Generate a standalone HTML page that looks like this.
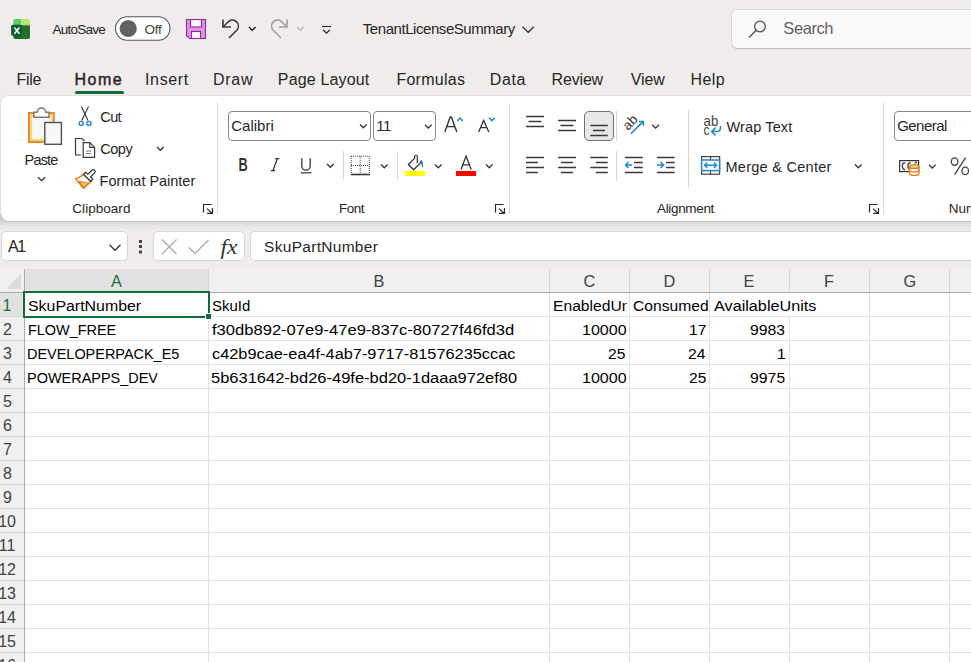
<!DOCTYPE html>
<html><head><meta charset="utf-8">
<style>
html,body{margin:0;padding:0;}
body{width:971px;height:662px;overflow:hidden;position:relative;background:#f0ecec;font-family:"Liberation Sans",sans-serif;}
.t{position:absolute;white-space:pre;font-family:"Liberation Sans",sans-serif;}
.abs{position:absolute;}
#ribbon{position:absolute;left:1px;top:96px;width:990px;height:125px;background:#fff;border-radius:8px;box-shadow:0 0 0 1px rgba(0,0,0,0.05);}
.box{position:absolute;background:#fff;border:1px solid #d9d6d6;border-radius:5px;box-sizing:border-box;}
.sbox{position:absolute;background:#fff;border:1px solid #8a8886;border-radius:4px;box-sizing:border-box;}
.hl{position:absolute;height:1px;}
.vl{position:absolute;width:1px;}
.cell{position:absolute;overflow:hidden;white-space:pre;font-family:"Liberation Sans",sans-serif;}
</style></head><body>
<!-- search box -->
<div class="abs" style="left:732px;top:10px;width:260px;height:38px;background:#fafafa;border-radius:5px;box-shadow:0 0 0 1px rgba(0,0,0,0.07),0 1px 1px rgba(0,0,0,0.14);"></div>
<!-- home underline -->
<div class="abs" style="left:75px;top:91px;width:49px;height:3px;border-radius:1.5px;background:#0f6e3b;"></div>
<!-- ribbon -->
<div class="abs" style="left:0;top:214px;width:971px;height:17px;background:linear-gradient(#cfcdcd 0px,#cfcdcd 7px,#d9d7d7 8px,#e0dede 10px,#e6e4e4 12px,#eae8e8 14px,#eeebeb 17px);"></div>
<div id="ribbon"></div>
<!-- font boxes -->
<div class="sbox" style="left:228px;top:111px;width:143px;height:30px;"></div>
<div class="sbox" style="left:373px;top:111px;width:63px;height:30px;"></div>
<div class="sbox" style="left:894px;top:111px;width:100px;height:30px;"></div>
<!-- selected bottom align button -->
<div class="abs" style="left:584px;top:111px;width:30px;height:30px;box-sizing:border-box;background:#e8e8e8;border:1px solid #707070;border-radius:5px;"></div>
<!-- formula bar boxes -->
<div class="box" style="left:1px;top:231px;width:127px;height:30px;"></div>
<div class="box" style="left:153px;top:231px;width:92px;height:30px;"></div>
<div class="box" style="left:250px;top:231px;width:740px;height:30px;"></div>

<!-- GRID -->
<div class="abs" style="left:0;top:269px;width:971px;height:393px;background:#fff;"></div>
<div class="abs" style="left:0;top:269px;width:971px;height:23px;background:#f0f0f0;"></div>
<div class="abs" style="left:0;top:292px;width:24px;height:370px;background:#f0f0f0;"></div>
<div class="abs" style="left:25px;top:269px;width:183px;height:23px;background:#e1e1e1;"></div>
<div class="abs" style="left:0;top:293px;width:24px;height:23px;background:#e1e1e1;"></div>
<div class="hl" style="left:0;top:316px;width:24px;background:#d6d6d6"></div>
<div class="hl" style="left:25px;top:316px;width:946px;background:#e1e1e1"></div>
<div class="hl" style="left:0;top:340px;width:24px;background:#d6d6d6"></div>
<div class="hl" style="left:25px;top:340px;width:946px;background:#e1e1e1"></div>
<div class="hl" style="left:0;top:364px;width:24px;background:#d6d6d6"></div>
<div class="hl" style="left:25px;top:364px;width:946px;background:#e1e1e1"></div>
<div class="hl" style="left:0;top:388px;width:24px;background:#d6d6d6"></div>
<div class="hl" style="left:25px;top:388px;width:946px;background:#e1e1e1"></div>
<div class="hl" style="left:0;top:412px;width:24px;background:#d6d6d6"></div>
<div class="hl" style="left:25px;top:412px;width:946px;background:#e1e1e1"></div>
<div class="hl" style="left:0;top:436px;width:24px;background:#d6d6d6"></div>
<div class="hl" style="left:25px;top:436px;width:946px;background:#e1e1e1"></div>
<div class="hl" style="left:0;top:460px;width:24px;background:#d6d6d6"></div>
<div class="hl" style="left:25px;top:460px;width:946px;background:#e1e1e1"></div>
<div class="hl" style="left:0;top:484px;width:24px;background:#d6d6d6"></div>
<div class="hl" style="left:25px;top:484px;width:946px;background:#e1e1e1"></div>
<div class="hl" style="left:0;top:508px;width:24px;background:#d6d6d6"></div>
<div class="hl" style="left:25px;top:508px;width:946px;background:#e1e1e1"></div>
<div class="hl" style="left:0;top:532px;width:24px;background:#d6d6d6"></div>
<div class="hl" style="left:25px;top:532px;width:946px;background:#e1e1e1"></div>
<div class="hl" style="left:0;top:556px;width:24px;background:#d6d6d6"></div>
<div class="hl" style="left:25px;top:556px;width:946px;background:#e1e1e1"></div>
<div class="hl" style="left:0;top:580px;width:24px;background:#d6d6d6"></div>
<div class="hl" style="left:25px;top:580px;width:946px;background:#e1e1e1"></div>
<div class="hl" style="left:0;top:604px;width:24px;background:#d6d6d6"></div>
<div class="hl" style="left:25px;top:604px;width:946px;background:#e1e1e1"></div>
<div class="hl" style="left:0;top:628px;width:24px;background:#d6d6d6"></div>
<div class="hl" style="left:25px;top:628px;width:946px;background:#e1e1e1"></div>
<div class="hl" style="left:0;top:652px;width:24px;background:#d6d6d6"></div>
<div class="hl" style="left:25px;top:652px;width:946px;background:#e1e1e1"></div>
<div class="vl" style="left:208px;top:269px;height:23px;background:#d6d6d6"></div>
<div class="vl" style="left:208px;top:293px;height:369px;background:#e1e1e1"></div>
<div class="vl" style="left:549px;top:269px;height:23px;background:#d6d6d6"></div>
<div class="vl" style="left:549px;top:293px;height:369px;background:#e1e1e1"></div>
<div class="vl" style="left:629px;top:269px;height:23px;background:#d6d6d6"></div>
<div class="vl" style="left:629px;top:293px;height:369px;background:#e1e1e1"></div>
<div class="vl" style="left:709px;top:269px;height:23px;background:#d6d6d6"></div>
<div class="vl" style="left:709px;top:293px;height:369px;background:#e1e1e1"></div>
<div class="vl" style="left:789px;top:269px;height:23px;background:#d6d6d6"></div>
<div class="vl" style="left:789px;top:317px;height:345px;background:#e1e1e1"></div>
<div class="vl" style="left:869px;top:269px;height:23px;background:#d6d6d6"></div>
<div class="vl" style="left:869px;top:293px;height:369px;background:#e1e1e1"></div>
<div class="vl" style="left:949px;top:269px;height:23px;background:#d6d6d6"></div>
<div class="vl" style="left:949px;top:293px;height:369px;background:#e1e1e1"></div>
<div class="hl" style="left:0;top:292px;width:971px;background:#ababab"></div>
<div class="vl" style="left:24px;top:269px;height:393px;background:#ababab"></div>
<!-- corner triangle -->
<svg class="abs" style="left:0;top:269px" width="24" height="23"><path d="M6,20 L21,20 L21,5 Z" fill="#dcdcdc"/></svg>
<!-- selection -->
<div class="abs" style="left:23px;top:291px;width:187px;height:27px;box-sizing:border-box;border:2px solid #0f6e3b;"></div>
<div class="abs" style="left:205px;top:313px;width:7px;height:7px;background:#fff;"></div>
<div class="abs" style="left:206px;top:314px;width:5px;height:5px;background:#0f6e3b;"></div>

<svg class="abs" style="left:0;top:0;pointer-events:none" width="971" height="662" viewBox="0 0 971 662">
<!-- Excel logo -->
<g>
  <path d="M13.3,21 a2,2 0 0 1 2,-2 H21.2 V25.6 H13.3 Z" fill="#5fcd62"/>
  <path d="M21.2,19 H27.8 a2,2 0 0 1 2,2 V25.6 H21.2 Z" fill="#b3e66e"/>
  <path d="M13.3,25.6 H29.8 V37 a2,2 0 0 1 -2,2 H15.3 a2,2 0 0 1 -2,-2 Z" fill="#1b6329"/>
  <path d="M21.2,25.6 H29.8 V37 a2,2 0 0 1 -2,2 H21.2 Z" fill="#246d2b"/>
  <rect x="11.1" y="24.8" width="10.8" height="11" rx="1.8" fill="#0f5a32"/>
  <path d="M14.4,27.6 L19.4,33.7 M19.4,27.6 L14.4,33.7" stroke="#fff" stroke-width="1.6"/>
</g>
<!-- toggle -->
<rect x="115.5" y="16.8" width="54.5" height="23.4" rx="11.7" fill="#fff" stroke="#555" stroke-width="1.1"/>
<circle cx="128.2" cy="28.5" r="8.6" fill="#616161"/>
<!-- save -->
<path d="M186.5,19.5 H205.5 V38.5 H189.5 L186.5,35.5 Z" fill="#d994dd" stroke="#9c22a8" stroke-width="1.1"/>
<rect x="190.5" y="19.5" width="11" height="7.5" fill="#fbf7fb" stroke="#9c22a8" stroke-width="1.1"/>
<rect x="191.5" y="31.5" width="9" height="7" fill="#fbf7fb" stroke="#9c22a8" stroke-width="1.1"/>
<!-- undo -->
<g fill="none" stroke="#3a3a3a" stroke-width="1.6">
  <path d="M223,19.5 V27 H231"/>
  <path d="M223,27 L228.8,21.3 A6 6 0 0 1 237.2,29.7 L229,38"/>
</g>
<path d="M249,27 L252.3,30.3 L255.6,27" fill="none" stroke="#222" stroke-width="1.4"/>
<!-- redo -->
<g fill="none" stroke="#9e9e9e" stroke-width="1.6">
  <path d="M287,19.5 V27 H279"/>
  <path d="M287,27 L281.2,21.3 A6 6 0 0 0 272.8,29.7 L281,38"/>
</g>
<path d="M297,27 L300.3,30.3 L303.6,27" fill="none" stroke="#b5b5b5" stroke-width="1.3"/>
<!-- customize -->
<path d="M322,26.5 H331" stroke="#222" stroke-width="1.1"/>
<path d="M323.1,29.9 L326.5,33.2 L329.9,29.9" fill="none" stroke="#222" stroke-width="1.3"/>
<!-- title chevron -->
<path d="M522.5,26.8 L528.2,32.3 L533.8,26.8" fill="none" stroke="#333" stroke-width="1.3"/>
<!-- search magnifier -->
<circle cx="760" cy="26.5" r="5.3" fill="none" stroke="#555" stroke-width="1.3"/>
<path d="M756.2,30.3 L749,37.5" stroke="#555" stroke-width="1.4"/>

<!-- ===== Ribbon: Clipboard ===== -->
<!-- paste -->
<rect x="29" y="113" width="24.8" height="29" fill="#f8f8f8" stroke="#ea8a22" stroke-width="2"/>
<rect x="31.1" y="115.1" width="20.6" height="24.8" fill="none" stroke="#f8d98a" stroke-width="2.2"/>
<path d="M33.8,112.2 H37.1 A4.3,4.3 0 0 1 45.7,112.2 H49 V117.3 H33.8 Z" fill="#fff" stroke="#7a7a7a" stroke-width="1.5"/>
<rect x="44.8" y="122.5" width="16.6" height="21.8" fill="#f8f8f8" stroke="#505050" stroke-width="1.4"/>
<path d="M38,177.2 L41.6,180.6 L45.2,177.2" fill="none" stroke="#333" stroke-width="1.3"/>
<!-- scissors -->
<path d="M81.4,106.5 L88,120.5 M88.5,106.5 L81.8,120.5" fill="none" stroke="#333" stroke-width="1.1"/>
<circle cx="81.2" cy="123.4" r="2.1" fill="#fff" stroke="#1a86d0" stroke-width="1.3"/>
<circle cx="88.9" cy="123.4" r="2.1" fill="#fff" stroke="#1a86d0" stroke-width="1.3"/>
<!-- copy -->
<path d="M81,155 H75.5 V138.5 H82 L84.5,141" fill="#fafafa" stroke="#3b3b3b" stroke-width="1.2"/>
<path d="M83.2,142.6 H89.8 L94.6,147.4 V157.3 H83.2 Z" fill="#fff" stroke="#3b3b3b" stroke-width="1.2"/>
<path d="M89.8,142.6 V147.4 H94.6" fill="none" stroke="#3b3b3b" stroke-width="1.2"/>
<path d="M86.1,151 H91.2 M86.1,153.6 H91.2" stroke="#777" stroke-width="1"/>
<path d="M157,147 L160.3,150.3 L163.6,147" fill="none" stroke="#333" stroke-width="1.3"/>
<!-- format painter -->
<g transform="translate(72,166)">
  <path d="M11.4,8.2 C9,10.5 6,12.5 3.3,12.6 L11.4,22.4 C14,20 16.5,18 18.8,15.5 Z" fill="#fff" stroke="#e8740e" stroke-width="1.3" stroke-linejoin="round"/>
  <path d="M6.8,15.2 L17,17.3 L11.4,21.4 Z" fill="#f6d07a" stroke="#e8740e" stroke-width="1.1" stroke-linejoin="round"/>
  <path d="M11.4,8.2 L13.6,6.2 L15.8,8.4 L20.2,4 Q21.5,3 22.7,4.3 Q23.8,5.5 22.8,6.7 L18.6,11 L20.8,13.2 L18.8,15.5 Z" fill="#fff" stroke="#333" stroke-width="1.2" stroke-linejoin="round"/>
</g>
<!-- launchers -->
<g fill="none" stroke="#2a2a2a" stroke-width="1.2">
<path d="M203.5,212.5 V204.5 H211.5" /><path d="M207.0,208.6 L212.0,213.3 M207.0,213.3 H212.5 V208" />
<path d="M495.5,212.5 V204.5 H503.5" /><path d="M499.0,208.6 L504.0,213.3 M499.0,213.3 H504.5 V208" />
<path d="M869.5,212.5 V204.5 H877.5" /><path d="M873.0,208.6 L878.0,213.3 M873.0,213.3 H878.5 V208" />
</g>
<!-- separators -->
<g fill="#d8d8d8">
  <rect x="217" y="103" width="1" height="111"/>
  <rect x="509" y="103" width="1" height="111"/>
  <rect x="883" y="103" width="1" height="111"/>
  <rect x="343" y="151" width="1" height="29"/>
  <rect x="397" y="151" width="1" height="29"/>
  <rect x="616" y="111" width="1" height="30"/>
  <rect x="616" y="151" width="1" height="30"/>
  <rect x="688" y="110" width="1" height="78"/>
</g>
<!-- ===== Font ===== -->
<g fill="none" stroke="#333" stroke-width="1.3">
  <path d="M360,124.5 L363.3,127.8 L366.6,124.5"/>
  <path d="M425,124.8 L428.3,128.1 L431.6,124.8"/>
  <path d="M327,164 L330.3,167.3 L333.6,164"/>
  <path d="M381,164.5 L384.3,167.8 L387.6,164.5"/>
  <path d="M435,164.5 L438.3,167.8 L441.6,164.5"/>
  <path d="M486,164.5 L489.3,167.8 L492.6,164.5"/>
</g>
<!-- grow/shrink font -->
<path d="M444.8,132 L450.2,116.9 H451.4 L456.8,132 M446.8,126.6 H454.8" fill="none" stroke="#333" stroke-width="1.4"/>
<path d="M457.3,121 L460,118 L462.7,121" fill="none" stroke="#1a86d0" stroke-width="1.5"/>
<path d="M478.6,132 L483.7,120.4 L488.8,132 M480.4,127.6 H487" fill="none" stroke="#333" stroke-width="1.3"/>
<path d="M489,117.8 L491.8,120.6 L494.6,117.8" fill="none" stroke="#1a86d0" stroke-width="1.5"/>
<!-- B I U -->
<text x="238.6" y="171" font-family="Liberation Sans" font-weight="bold" font-size="17.5" fill="#333" textLength="9.2" lengthAdjust="spacingAndGlyphs">B</text>
<path d="M275.2,158.6 H279.4 M270.8,170.7 H275 M277.3,158.6 L272.9,170.7" fill="none" stroke="#333" stroke-width="1.3"/>
<path d="M301.8,158.3 V166 A4.2,4.2 0 0 0 310.2,166 V158.3" fill="none" stroke="#333" stroke-width="1.3"/>
<path d="M300.8,172.8 H311.5" stroke="#333" stroke-width="1.2"/>
<!-- borders -->
<g stroke="#444" stroke-width="1" stroke-dasharray="1 1" fill="none">
  <path d="M351,156.2 H369.5 M351,165.5 H369.5 M351.2,156 V174 M369.3,156 V174 M360.2,156 V174"/>
</g>
<path d="M350.8,174.5 H370" stroke="#333" stroke-width="1.6"/>
<!-- fill bucket -->
<path d="M414.5,158.4 L408.4,164.5 L413.6,169.7 L420.6,162.9" fill="#fafafa" stroke="#333" stroke-width="1.3" stroke-linejoin="round"/>
<path d="M414.6,158.8 V156.6 A1.35,1.35 0 0 1 417.3,156.6 V163" fill="none" stroke="#333" stroke-width="1.2"/>
<path d="M419.6,162.2 Q420.3,159.6 422,160.4 Q423.4,161.6 422.7,168.3 Q421.5,166.5 421.2,163.6 Z" fill="#1e6fc4"/>
<rect x="405" y="171" width="20.2" height="5" fill="#ffff00"/>
<!-- font color -->
<path d="M461,169.5 L466.1,156 L471.2,169.5 M462.8,164.8 H469.4" fill="none" stroke="#333" stroke-width="1.3"/>
<rect x="456" y="171" width="20" height="5" fill="#ff0000"/>

<!-- ===== Alignment ===== -->
<g stroke="#3a3a3a" stroke-width="1.3" fill="none">
  <path d="M526,116.5 H544 M528.5,121.5 H541.5 M526,126.5 H544"/>
  <path d="M558,120.5 H576 M560.5,125.5 H573.5 M558,130.5 H576"/>
  <path d="M590.3,125.5 H607.8 M593,130.5 H605 M590.3,135.5 H607.8"/>
  <path d="M526,157.5 H544 M526,162.5 H538 M526,167.5 H544 M526,172.5 H538"/>
  <path d="M558,157.5 H576 M561,162.5 H573 M558,167.5 H576 M561,172.5 H573"/>
  <path d="M590.3,157.5 H607.8 M595.8,162.5 H607.8 M590.3,167.5 H607.8 M595.8,172.5 H607.8"/>
  <path d="M625,157.5 H642.8 M634,162.5 H642.8 M634,167.5 H642.8 M625,172.5 H642.8"/>
  <path d="M657,157.5 H674.7 M666,162.5 H674.7 M666,167.5 H674.7 M657,172.5 H674.7"/>
</g>
<g stroke="#1a86d0" stroke-width="1.4" fill="none">
  <path d="M632,165 H625.5 M628.5,162 L625.5,165 L628.5,168"/>
  <path d="M657,165 H663.5 M660.5,162 L663.5,165 L660.5,168"/>
</g>
<!-- orientation -->
<text x="0" y="0" transform="translate(627.9,130.9) rotate(-45)" font-family="Liberation Sans" font-size="13.5" fill="#333">ab</text>
<path d="M630.8,133.8 L643.4,121.4 M639,121.4 H643.4 V125.8" fill="none" stroke="#1a86d0" stroke-width="1.5"/>
<path d="M652.3,124.8 L655.6,128.1 L658.9,124.8" fill="none" stroke="#333" stroke-width="1.3"/>
<!-- wrap text -->
<text x="703.6" y="125.8" font-family="Liberation Sans" font-size="14.2" fill="#444" textLength="14.6" lengthAdjust="spacingAndGlyphs">ab</text>
<text x="703.4" y="134.8" font-family="Liberation Sans" font-size="14.2" fill="#444" textLength="6" lengthAdjust="spacingAndGlyphs">c</text>
<path d="M720.5,126 V127.5 Q720.5,131.6 715.8,131.6 H711.8 M715.6,127.6 L711.6,131.6 L715.6,135.5" fill="none" stroke="#1a86d0" stroke-width="1.5"/>
<!-- merge -->
<rect x="701.6" y="156.6" width="18" height="17.6" fill="#fff" stroke="#444" stroke-width="1.2"/>
<path d="M710.5,156.6 V160 M710.5,170.5 V174.2" stroke="#444" stroke-width="1.1"/>
<rect x="701.6" y="160" width="18" height="10.6" fill="#fff" stroke="#1a86d0" stroke-width="1.5"/>
<path d="M704.5,165.3 H716.6 M707.3,162.5 L704.5,165.3 L707.3,168.1 M713.8,162.5 L716.6,165.3 L713.8,168.1" fill="none" stroke="#1a86d0" stroke-width="1.4"/>
<path d="M855,164.5 L858.3,167.8 L861.6,164.5" fill="none" stroke="#333" stroke-width="1.3"/>
<!-- ===== Number ===== -->
<rect x="899.6" y="160.6" width="19" height="11" fill="#fff" stroke="#333" stroke-width="1.2"/>
<path d="M905.2,162.8 A2.9,3.5 0 0 0 905.2,169.8 M910.8,162.8 A2.9,3.5 0 0 0 910.8,169.8 M914.5,162.5 H917" fill="none" stroke="#4a4a4a" stroke-width="1.4"/>
<path d="M909.5,166.6 V173.5 A4.7,1.9 0 0 0 918.9,173.5 V166.6" fill="#fff" stroke="#e8740e" stroke-width="1.3"/>
<path d="M909.5,170 A4.7,1.9 0 0 0 918.9,170" fill="none" stroke="#e8740e" stroke-width="1.2"/>
<ellipse cx="914.2" cy="166.6" rx="4.7" ry="1.9" fill="#f7d98a" stroke="#e8740e" stroke-width="1.3"/>
<path d="M929,164.8 L932.3,168.1 L935.6,164.8" fill="none" stroke="#333" stroke-width="1.3"/>
<g fill="none" stroke="#444" stroke-width="1.3"><ellipse cx="954.6" cy="161.6" rx="3.3" ry="3.7"/><ellipse cx="965.2" cy="170.9" rx="3.3" ry="3.7"/><path d="M965.6,157.6 L954.6,174.7"/></g>

<!-- ===== formula bar ===== -->
<path d="M109.5,244.8 L115,250.3 L120.5,244.8" fill="none" stroke="#333" stroke-width="1.3"/>
<g fill="#444"><rect x="139" y="240" width="3" height="3"/><rect x="139" y="245" width="3" height="3"/><rect x="139" y="250.5" width="3" height="3"/></g>
<path d="M162,239.5 L176.5,254 M176.5,239.5 L162,254" stroke="#a8a8a8" stroke-width="1.2"/>
<path d="M189,247.5 L195,253.5 L208.5,240" fill="none" stroke="#a8a8a8" stroke-width="1.2"/>
<text x="220.5" y="253.5" font-family="Liberation Serif" font-style="italic" font-size="21" fill="#333" textLength="17" lengthAdjust="spacingAndGlyphs">fx</text>
</svg>

<div class="t" style="left:52.50px;top:20.72px;font-size:13.5px;line-height:17px;color:#262626;font-weight:400;letter-spacing:-0.748px;">AutoSave</div>
<div class="t" style="left:144.60px;top:20.52px;font-size:13.5px;line-height:17px;color:#424242;font-weight:400;letter-spacing:-0.304px;">Off</div>
<div class="t" style="left:362.80px;top:19.40px;font-size:15px;line-height:19px;color:#262626;font-weight:400;letter-spacing:-0.443px;">TenantLicenseSummary</div>
<div class="t" style="left:783.30px;top:17.98px;font-size:16.5px;line-height:21px;color:#616161;font-weight:400;letter-spacing:-0.421px;">Search</div>
<div class="t" style="left:16.40px;top:69.76px;font-size:16px;line-height:20px;color:#262626;font-weight:400;letter-spacing:-0.261px;">File</div>
<div class="t" style="left:74.50px;top:69.76px;font-size:16px;line-height:20px;color:#262626;font-weight:400;letter-spacing:1.506px;-webkit-text-stroke:0.45px #262626">Home</div>
<div class="t" style="left:145.00px;top:69.76px;font-size:16px;line-height:20px;color:#262626;font-weight:400;letter-spacing:0.646px;">Insert</div>
<div class="t" style="left:213.00px;top:69.76px;font-size:16px;line-height:20px;color:#262626;font-weight:400;letter-spacing:0.740px;">Draw</div>
<div class="t" style="left:277.80px;top:69.76px;font-size:16px;line-height:20px;color:#262626;font-weight:400;letter-spacing:0.159px;">Page Layout</div>
<div class="t" style="left:396.40px;top:69.76px;font-size:16px;line-height:20px;color:#262626;font-weight:400;letter-spacing:0.274px;">Formulas</div>
<div class="t" style="left:489.80px;top:69.76px;font-size:16px;line-height:20px;color:#262626;font-weight:400;letter-spacing:0.567px;">Data</div>
<div class="t" style="left:551.60px;top:69.76px;font-size:16px;line-height:20px;color:#262626;font-weight:400;letter-spacing:-0.181px;">Review</div>
<div class="t" style="left:630.70px;top:69.76px;font-size:16px;line-height:20px;color:#262626;font-weight:400;letter-spacing:-0.079px;">View</div>
<div class="t" style="left:690.50px;top:69.76px;font-size:16px;line-height:20px;color:#262626;font-weight:400;letter-spacing:0.397px;">Help</div>
<div class="t" style="left:24.60px;top:150.78px;font-size:14.5px;line-height:19px;color:#262626;font-weight:400;letter-spacing:-0.829px;">Paste</div>
<div class="t" style="left:100.30px;top:108.08px;font-size:14.5px;line-height:19px;color:#262626;font-weight:400;letter-spacing:-0.618px;">Cut</div>
<div class="t" style="left:100.30px;top:139.78px;font-size:14.5px;line-height:19px;color:#262626;font-weight:400;letter-spacing:-0.500px;">Copy</div>
<div class="t" style="left:99.60px;top:171.58px;font-size:14.5px;line-height:19px;color:#262626;font-weight:400;letter-spacing:-0.020px;">Format Painter</div>
<div class="t" style="left:72.30px;top:199.62px;font-size:13.5px;line-height:17px;color:#262626;font-weight:400;letter-spacing:0.041px;">Clipboard</div>
<div class="t" style="left:231.20px;top:116.30px;font-size:15px;line-height:19px;color:#262626;font-weight:400;letter-spacing:0.020px;">Calibri</div>
<div class="t" style="left:376.20px;top:116.40px;font-size:15px;line-height:19px;color:#262626;font-weight:400;letter-spacing:-0.529px;">11</div>
<div class="t" style="left:339.00px;top:199.62px;font-size:13.5px;line-height:17px;color:#262626;font-weight:400;letter-spacing:-0.487px;">Font</div>
<div class="t" style="left:657.00px;top:199.62px;font-size:13.5px;line-height:17px;color:#262626;font-weight:400;letter-spacing:-0.335px;">Alignment</div>
<div class="t" style="left:726.50px;top:118.18px;font-size:14.5px;line-height:19px;color:#262626;font-weight:400;letter-spacing:0.128px;">Wrap Text</div>
<div class="t" style="left:725.50px;top:158.18px;font-size:14.5px;line-height:19px;color:#262626;font-weight:400;letter-spacing:0.268px;">Merge &amp; Center</div>
<div class="t" style="left:897.20px;top:116.40px;font-size:15px;line-height:19px;color:#262626;font-weight:400;letter-spacing:-0.539px;">General</div>
<div class="t" style="left:948.80px;top:199.62px;font-size:13.5px;line-height:17px;color:#262626;font-weight:400;letter-spacing:0.000px;">Number</div>
<div class="t" style="left:8.00px;top:236.56px;font-size:16px;line-height:20px;color:#262626;font-weight:400;letter-spacing:-1.472px;">A1</div>
<div class="t" style="left:264.10px;top:236.93px;font-size:15.5px;line-height:20px;color:#262626;font-weight:400;letter-spacing:0.292px;">SkuPartNumber</div>
<div class="t" style="left:111.00px;top:270.85px;font-size:16.3px;line-height:21px;color:#1d6b3f">A</div>
<div class="t" style="left:373.50px;top:270.85px;font-size:16.3px;line-height:21px;color:#424242">B</div>
<div class="t" style="left:583.50px;top:270.85px;font-size:16.3px;line-height:21px;color:#424242">C</div>
<div class="t" style="left:663.50px;top:270.85px;font-size:16.3px;line-height:21px;color:#424242">D</div>
<div class="t" style="left:743.50px;top:270.85px;font-size:16.3px;line-height:21px;color:#424242">E</div>
<div class="t" style="left:824.00px;top:270.85px;font-size:16.3px;line-height:21px;color:#424242">F</div>
<div class="t" style="left:903.50px;top:270.85px;font-size:16.3px;line-height:21px;color:#424242">G</div>
<div class="t" style="left:2.60px;top:295.96px;font-size:16px;line-height:20px;color:#1d6b3f">1</div>
<div class="t" style="left:3.10px;top:319.96px;font-size:16px;line-height:20px;color:#424242">2</div>
<div class="t" style="left:3.10px;top:343.96px;font-size:16px;line-height:20px;color:#424242">3</div>
<div class="t" style="left:3.10px;top:367.96px;font-size:16px;line-height:20px;color:#424242">4</div>
<div class="t" style="left:3.10px;top:391.96px;font-size:16px;line-height:20px;color:#424242">5</div>
<div class="t" style="left:3.10px;top:415.96px;font-size:16px;line-height:20px;color:#424242">6</div>
<div class="t" style="left:3.10px;top:439.96px;font-size:16px;line-height:20px;color:#424242">7</div>
<div class="t" style="left:3.10px;top:463.96px;font-size:16px;line-height:20px;color:#424242">8</div>
<div class="t" style="left:3.10px;top:487.96px;font-size:16px;line-height:20px;color:#424242">9</div>
<div class="t" style="left:-1.85px;top:511.96px;font-size:16px;line-height:20px;color:#424242">10</div>
<div class="t" style="left:-1.26px;top:535.96px;font-size:16px;line-height:20px;color:#424242">11</div>
<div class="t" style="left:-1.85px;top:559.96px;font-size:16px;line-height:20px;color:#424242">12</div>
<div class="t" style="left:-1.85px;top:583.96px;font-size:16px;line-height:20px;color:#424242">13</div>
<div class="t" style="left:-1.85px;top:607.96px;font-size:16px;line-height:20px;color:#424242">14</div>
<div class="t" style="left:-1.85px;top:631.96px;font-size:16px;line-height:20px;color:#424242">15</div>
<div class="t" style="left:-1.85px;top:655.96px;font-size:16px;line-height:20px;color:#424242">16</div>
<div class="cell" style="left:28.30px;top:296.13px;font-size:15.5px;line-height:20px;color:#000;transform:scaleX(1.0263);transform-origin:0 0">SkuPartNumber</div>
<div class="cell" style="left:211.80px;top:296.13px;font-size:15.5px;line-height:20px;color:#000;transform:scaleX(0.9637);transform-origin:0 0">SkuId</div>
<div class="cell" style="left:552.79px;top:296.13px;font-size:15.5px;line-height:20px;color:#000;transform:scaleX(1.0101);transform-origin:0 0;width:73.47px;overflow:hidden">EnabledUnits</div>
<div class="cell" style="left:633.00px;top:296.13px;font-size:15.5px;line-height:20px;color:#000;transform:scaleX(1.0101);transform-origin:0 0;width:75.24px;overflow:hidden">ConsumedUnits</div>
<div class="cell" style="left:713.80px;top:296.13px;font-size:15.5px;line-height:20px;color:#000;transform:scaleX(1.0460);transform-origin:0 0">AvailableUnits</div>
<div class="cell" style="left:27.77px;top:320.13px;font-size:15.5px;line-height:20px;color:#000;transform:scaleX(0.9315);transform-origin:0 0">FLOW_FREE</div>
<div class="cell" style="left:211.60px;top:320.13px;font-size:15.5px;line-height:20px;color:#000;transform:scaleX(1.0689);transform-origin:0 0">f30db892-07e9-47e9-837c-80727f46fd3d</div>
<div class="cell" style="left:581.76px;top:320.13px;font-size:15.5px;line-height:20px;color:#000;transform:scaleX(1.0357);transform-origin:0 0">10000</div>
<div class="cell" style="left:688.71px;top:320.13px;font-size:15.5px;line-height:20px;color:#000;transform:scaleX(1.0101);transform-origin:0 0">17</div>
<div class="cell" style="left:750.00px;top:320.13px;font-size:15.5px;line-height:20px;color:#000;transform:scaleX(1.0189);transform-origin:0 0">9983</div>
<div class="cell" style="left:27.47px;top:344.13px;font-size:15.5px;line-height:20px;color:#000;transform:scaleX(0.9322);transform-origin:0 0">DEVELOPERPACK_E5</div>
<div class="cell" style="left:211.60px;top:344.13px;font-size:15.5px;line-height:20px;color:#000;transform:scaleX(1.0542);transform-origin:0 0">c42b9cae-ea4f-4ab7-9717-81576235ccac</div>
<div class="cell" style="left:608.41px;top:344.13px;font-size:15.5px;line-height:20px;color:#000;transform:scaleX(1.0101);transform-origin:0 0">25</div>
<div class="cell" style="left:687.70px;top:344.13px;font-size:15.5px;line-height:20px;color:#000;transform:scaleX(1.0101);transform-origin:0 0">24</div>
<div class="cell" style="left:777.02px;top:344.13px;font-size:15.5px;line-height:20px;color:#000;transform:scaleX(1.0101);transform-origin:0 0">1</div>
<div class="cell" style="left:27.47px;top:368.13px;font-size:15.5px;line-height:20px;color:#000;transform:scaleX(0.9332);transform-origin:0 0">POWERAPPS_DEV</div>
<div class="cell" style="left:210.80px;top:368.13px;font-size:15.5px;line-height:20px;color:#000;transform:scaleX(1.0637);transform-origin:0 0">5b631642-bd26-49fe-bd20-1daaa972ef80</div>
<div class="cell" style="left:581.76px;top:368.13px;font-size:15.5px;line-height:20px;color:#000;transform:scaleX(1.0357);transform-origin:0 0">10000</div>
<div class="cell" style="left:688.71px;top:368.13px;font-size:15.5px;line-height:20px;color:#000;transform:scaleX(1.0101);transform-origin:0 0">25</div>
<div class="cell" style="left:749.90px;top:368.13px;font-size:15.5px;line-height:20px;color:#000;transform:scaleX(1.0218);transform-origin:0 0">9975</div>
</body></html>
